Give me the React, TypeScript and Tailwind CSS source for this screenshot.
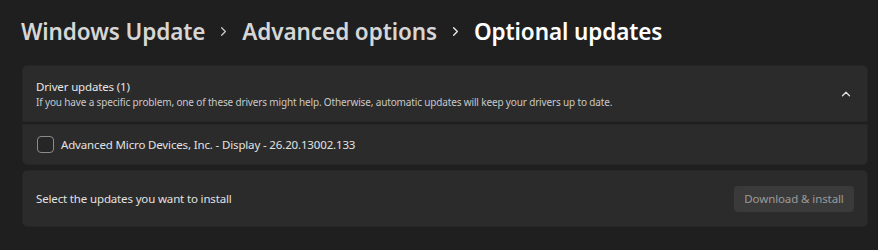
import { ChevronRight, ChevronUp } from "lucide-react";

const font = { fontFamily: '"Noto Sans", "Open Sans", sans-serif' };

export default function App() {
  return (
    <main
      className="w-[878px] h-[250px] bg-[#1f1f1f] text-white overflow-hidden"
      style={font}
    >
      <h1 className="flex items-center h-[64px] pl-[21px] pb-[1px] text-[22.5px] font-semibold tracking-[-0.1px]">
        <span className="text-[#d6d6d6]">Windows Update</span>
        <ChevronRight className="w-[15px] h-[15px] mx-[11px] text-[#c8c8c8]" strokeWidth={2} />
        <span className="text-[#d6d6d6]">Advanced options</span>
        <ChevronRight className="w-[15px] h-[15px] mx-[11px] text-[#e8e8e8]" strokeWidth={2.2} />
        <span className="text-white">Optional updates</span>
      </h1>

      <section className="mx-[22px] w-[846px] flex flex-col gap-[2px] mt-[1px]">
        <div className="flex items-center justify-between h-[57px] bg-[#2b2b2b] rounded-t-[5px] pl-[13px] pr-[14px] border border-[#262626]">
          <div className="flex flex-col">
            <span className="text-[11.5px] leading-[16px] tracking-[-0.15px] text-[#e6e6e6]">
              Driver updates (1)
            </span>
            <span className="text-[10px] leading-[14px] tracking-[-0.15px] text-[#c8c8c8]">
              If you have a specific problem, one of these drivers might help.
              Otherwise, automatic updates will keep your drivers up to date.
            </span>
          </div>
          <ChevronUp className="w-[14px] h-[14px] text-[#e0e0e0]" strokeWidth={2.2} />
        </div>
        <div className="flex items-center h-[41px] bg-[#2b2b2b] rounded-b-[5px] pl-[14px] border border-[#262626]">
          <span className="w-[17px] h-[17px] rounded-[4px] border border-[#8c8c8c] bg-[#262626]" />
          <span className="ml-[7px] text-[11.5px] tracking-[-0.15px] text-[#e2e2e2]">
            Advanced Micro Devices, Inc. - Display - 26.20.13002.133
          </span>
        </div>
      </section>

      <section className="mx-[22px] mt-[5px] w-[846px] h-[57px] flex items-center justify-between bg-[#2b2b2b] rounded-[5px] pl-[13px] pr-[13px] border border-[#262626]">
        <span className="text-[11.5px] tracking-[-0.15px] text-[#e2e2e2]">
          Select the updates you want to install
        </span>
        <button className="w-[120px] h-[26px] rounded-[4px] bg-[#3a3a3a] text-[11.5px] tracking-[-0.1px] text-[#9b9b9b]">
          Download &amp; install
        </button>
      </section>
    </main>
  );
}
